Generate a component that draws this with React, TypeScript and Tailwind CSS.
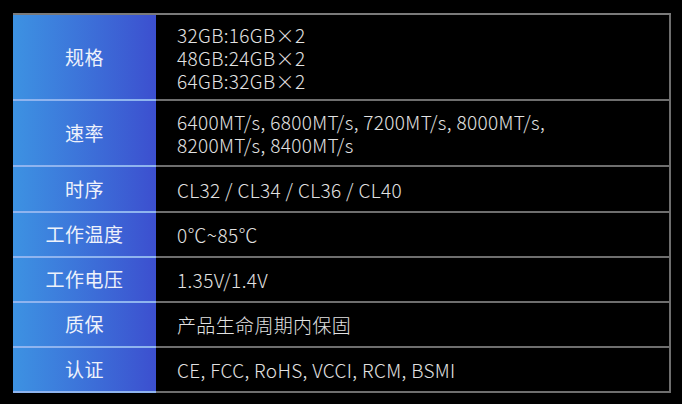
const rows: { label: string; lines: string[]; h: string }[] = [
  { label: "规格", lines: ["32GB:16GB×2", "48GB:24GB×2", "64GB:32GB×2"], h: "h-[86px]" },
  { label: "速率", lines: ["6400MT/s, 6800MT/s, 7200MT/s, 8000MT/s,", "8200MT/s, 8400MT/s"], h: "h-[66px]" },
  { label: "时序", lines: ["CL32 / CL34 / CL36 / CL40"], h: "h-[46px]" },
  { label: "工作温度", lines: ["0℃~85℃"], h: "h-[45px]" },
  { label: "工作电压", lines: ["1.35V/1.4V"], h: "h-[45px]" },
  { label: "质保", lines: ["产品生命周期内保固"], h: "h-[45px]" },
  { label: "认证", lines: ["CE, FCC, RoHS, VCCI, RCM, BSMI"], h: "h-[45px]" },
];

export default function App() {
  return (
    <div
      className="h-[404px] w-[682px] bg-black pl-[13px] pt-[13px]"
      style={{ fontFamily: '"Noto Sans CJK SC", "Noto Sans", sans-serif' }}
    >
      <div className="w-[658px] border-t-2 border-[#7a7a7a]">
        {rows.map((r) => (
          <div key={r.label} className={`flex ${r.h}`}>
            <div className="flex w-[143px] shrink-0 items-center justify-center border-b-2 border-[#8fb4ef] bg-gradient-to-r from-[#3d92e2] to-[#3c4fcf] text-[19px] tracking-[0.5px] text-[#eef2fb]">
              {r.label}
            </div>
            <div className="flex flex-1 flex-col justify-center border-b-2 border-r-2 border-[#6e6e6e] pl-[21px] text-[19px] font-light leading-[23px] tracking-[0.35px] text-[#e2e2e2]">
              {r.lines.map((l) => (
                <div key={l} className="whitespace-nowrap">{l}</div>
              ))}
            </div>
          </div>
        ))}
      </div>
    </div>
  );
}
